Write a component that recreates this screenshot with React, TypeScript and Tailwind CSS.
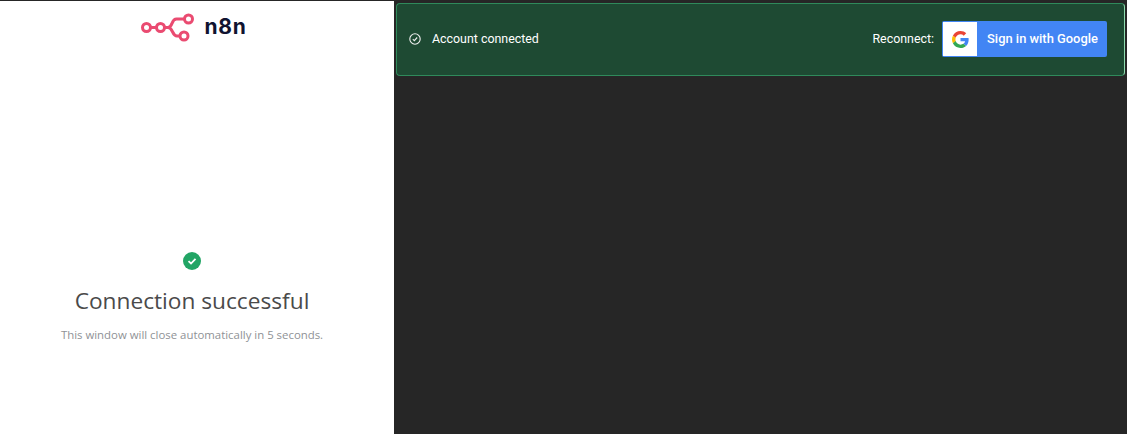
const App = () => {
  return (
    <div className="w-[1127px] h-[434px] flex overflow-hidden bg-[#262626] border-t border-[#262626]">
      {/* Popup window */}
      <div className="w-[394px] h-full bg-white flex flex-col items-center pr-[10px] font-['Open_Sans',sans-serif]">
        <div className="mt-[11px] h-[30px] flex items-center gap-[10px] pl-[3px]">
          <svg width="54" height="30" viewBox="0 0 54 30" fill="none" stroke="#ea4b71" strokeWidth="3" className="mt-[2px]">
            <circle cx="5.5" cy="14.5" r="4" />
            <circle cx="19.5" cy="14.5" r="4" />
            <circle cx="47.5" cy="6" r="4" />
            <circle cx="43" cy="23" r="4" />
            <path d="M9.5 14.5H15.5M23.5 14.5H27C32 14.5 30 6 35.5 6H43.5M27 14.5C32 14.5 31 23 36 23H39" />
          </svg>
          <span className="text-[21px] font-bold tracking-[0.7px] text-[#101330] font-['Inter',sans-serif]">n8n</span>
        </div>
        <div className="mt-[210px] w-[18px] h-[18px] rounded-full bg-[#22a565] flex items-center justify-center">
          <svg width="10" height="10" viewBox="0 0 10 10" fill="none" stroke="white" strokeWidth="1.8">
            <path d="M1.5 5.2L4 7.5L8.5 2.8" />
          </svg>
        </div>
        <h1 className="mt-[16px] text-[22.7px] leading-[30px] text-[#4a4a4a]">Connection successful</h1>
        <p className="mt-[11px] text-[11.4px] leading-[16px] text-[#8f9296]">This window will close automatically in 5 seconds.</p>
      </div>

      {/* Credential panel */}
      <div className="flex-1 pl-[2px] pr-[2px] pt-[2px] font-['Roboto',sans-serif]">
        <div className="h-[73px] bg-[#1e4a33] border border-[#2f8a5b] border-r-[#8edcae] rounded-[4px] flex items-center justify-between pl-[13px] pr-[17px]">
          <div className="flex items-center gap-[11px] text-white text-[12.4px]">
            <svg width="12" height="12" viewBox="0 0 12 12" fill="none" stroke="#f0f0f0" strokeWidth="1.1" className="-ml-[1px]">
              <circle cx="6" cy="6" r="5.2" />
              <path d="M3.8 6.2L5.3 7.6L8.2 4.5" />
            </svg>
            <span>Account connected</span>
          </div>
          <div className="flex items-center gap-[8px] -mt-[1px]">
            <span className="text-white text-[12.4px] mt-[1px]">Reconnect:</span>
            <button className="h-[36px] w-[165px] bg-[#4285f4] rounded-[2px] flex items-center p-[1px]">
              <span className="w-[34px] h-[34px] bg-white flex items-center justify-center">
                <svg width="17" height="17" viewBox="0 0 48 48">
                  <path fill="#EA4335" d="M24 9.5c3.54 0 6.71 1.22 9.21 3.6l6.85-6.85C35.9 2.38 30.47 0 24 0 14.62 0 6.51 5.38 2.56 13.22l7.98 6.19C12.43 13.72 17.74 9.5 24 9.5z" />
                  <path fill="#4285F4" d="M46.98 24.55c0-1.57-.15-3.09-.38-4.55H24v9.02h12.94c-.58 2.96-2.26 5.48-4.78 7.18l7.73 6c4.51-4.18 7.09-10.36 7.09-17.65z" />
                  <path fill="#FBBC05" d="M10.53 28.59c-.48-1.45-.76-2.99-.76-4.59s.27-3.14.76-4.59l-7.98-6.19C.92 16.46 0 20.12 0 24c0 3.88.92 7.54 2.56 10.78l7.97-6.19z" />
                  <path fill="#34A853" d="M24 48c6.48 0 11.93-2.13 15.89-5.81l-7.73-6c-2.15 1.45-4.92 2.3-8.16 2.3-6.26 0-11.57-4.22-13.47-9.91l-7.98 6.19C6.51 42.62 14.62 48 24 48z" />
                </svg>
              </span>
              <span className="flex-1 text-center pl-[2px] text-white text-[12.9px] font-medium">Sign in with Google</span>
            </button>
          </div>
        </div>
      </div>
    </div>
  );
};

export default App;
